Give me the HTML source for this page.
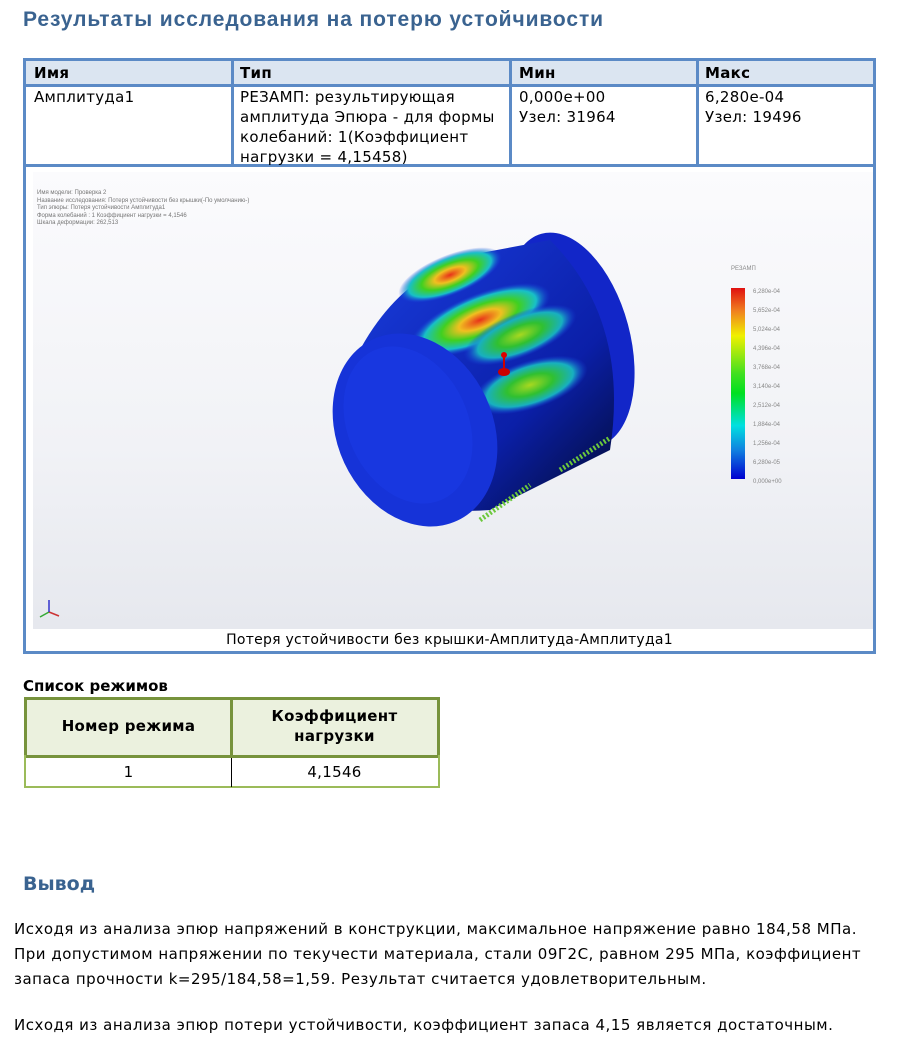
<!DOCTYPE html>
<html><head><meta charset="utf-8"><style>
body{margin:0;width:897px;height:1053px;background:#fff;font-family:"DejaVu Sans","Liberation Sans",sans-serif;color:#000;position:relative;overflow:hidden}
.a{position:absolute;white-space:nowrap}
h1{position:absolute;left:23px;top:8px;margin:0;font-family:"Liberation Sans",sans-serif;font-size:21px;font-weight:bold;color:#3a6390;letter-spacing:0.9px}
.t{font-size:15px;line-height:20px;letter-spacing:0.3px}
</style></head><body>
<h1>Результаты исследования на потерю устойчивости</h1>
<div class="a" style="left:23px;top:58px;width:847px;height:590px;border:3px solid #5b8ac6"></div>
<div class="a" style="left:26px;top:61px;width:847px;height:24px;background:#dbe5f1"></div>
<div class="a" style="left:26px;top:84px;width:847px;height:3px;background:#5b8ac6"></div>
<div class="a" style="left:26px;top:164px;width:847px;height:3px;background:#5b8ac6"></div>
<div class="a" style="left:231px;top:61px;width:3px;height:104px;background:#5b8ac6"></div>
<div class="a" style="left:509px;top:61px;width:3px;height:104px;background:#5b8ac6"></div>
<div class="a" style="left:696px;top:61px;width:3px;height:104px;background:#5b8ac6"></div>
<div class="a t" style="left:34px;top:63px;font-weight:bold">Имя</div>
<div class="a t" style="left:240px;top:63px;font-weight:bold">Тип</div>
<div class="a t" style="left:519px;top:63px;font-weight:bold">Мин</div>
<div class="a t" style="left:705px;top:63px;font-weight:bold">Макс</div>
<div class="a t" style="left:34px;top:87px">Амплитуда1</div>
<div class="a t" style="left:240px;top:87px">РЕЗАМП: результирующая<br>амплитуда Эпюра - для формы<br>колебаний: 1(Коэффициент<br>нагрузки = 4,15458)</div>
<div class="a t" style="left:519px;top:87px">0,000e+00<br>Узел: 31964</div>
<div class="a t" style="left:705px;top:87px">6,280e-04<br>Узел: 19496</div>
<div class="a" style="left:33px;top:172px;width:840px;height:457px;background:linear-gradient(180deg,#fbfbfd 0%,#f1f2f6 60%,#e6e8ee 100%)"></div>
<div class="a" style="left:37px;top:190px;font-family:'Liberation Sans',sans-serif;font-size:6px;line-height:7.6px;color:#777">Имя модели: Проверка 2<br>Название исследования: Потеря устойчивости без крышки(-По умолчанию-)<br>Тип эпюры: Потеря устойчивости Амплитуда1<br>Форма колебаний : 1 Коэффициент нагрузки = 4,1546<br>Шкала деформации: 262,513</div>
<svg class="a" style="left:330px;top:220px" width="320" height="320" viewBox="0 0 320 320">
<defs>
<radialGradient id="h1" cx="0.5" cy="0.5" r="0.5"><stop offset="0" stop-color="#e8301a"/><stop offset="0.3" stop-color="#f0c020"/><stop offset="0.55" stop-color="#40d020"/><stop offset="0.8" stop-color="#18c0c8"/><stop offset="1" stop-color="#1840e0" stop-opacity="0"/></radialGradient>
<radialGradient id="h2" cx="0.5" cy="0.5" r="0.5"><stop offset="0" stop-color="#a8d820"/><stop offset="0.4" stop-color="#30c030"/><stop offset="0.75" stop-color="#18b0c0"/><stop offset="1" stop-color="#1840e0" stop-opacity="0"/></radialGradient>
<linearGradient id="bd" x1="0" y1="0" x2="1" y2="1"><stop offset="0" stop-color="#1a3ee0"/><stop offset="0.65" stop-color="#0b1fa8"/><stop offset="1" stop-color="#020a30"/></linearGradient>
</defs>
<ellipse cx="240" cy="120" rx="60" ry="110" transform="rotate(-15 240 120)" fill="#1226c8"/>
<path d="M20 150 Q60 60 140 35 L220 20 Q300 100 280 230 L160 290 Q40 300 20 200 Z" fill="url(#bd)"/>
<ellipse cx="120" cy="55" rx="55" ry="20" transform="rotate(-22 120 55)" fill="url(#h1)"/>
<ellipse cx="150" cy="100" rx="75" ry="26" transform="rotate(-22 150 100)" fill="url(#h1)"/>
<ellipse cx="190" cy="115" rx="60" ry="22" transform="rotate(-22 190 115)" fill="url(#h2)"/>
<ellipse cx="200" cy="165" rx="60" ry="24" transform="rotate(-18 200 165)" fill="url(#h2)"/>
<ellipse cx="85" cy="210" rx="78" ry="100" transform="rotate(-25 85 210)" fill="#1633d8"/>
<ellipse cx="78" cy="205" rx="60" ry="82" transform="rotate(-25 78 205)" fill="#1a3ae6" opacity="0.6"/>
<line x1="174" y1="135" x2="174" y2="150" stroke="#c00" stroke-width="2"/>
<circle cx="174" cy="135" r="3" fill="#d00"/><ellipse cx="174" cy="152" rx="6" ry="4" fill="#c00"/>
<path d="M150 300 L200 265 M230 250 L280 218" stroke="#6cc83c" stroke-width="5" stroke-dasharray="2 2"/>
</svg>
<div class="a" style="left:731px;top:266px;font-family:'Liberation Sans',sans-serif;font-size:6px;color:#888">РЕЗАМП</div>
<div class="a" style="left:731px;top:288px;width:14px;height:191px;background:linear-gradient(180deg,#e01010,#f08020 12%,#f0f000 25%,#40e020 45%,#00e020 55%,#00e0e0 72%,#1080e0 85%,#0000d0)"></div>
<div class="a" style="left:753px;top:283px;font-family:'Liberation Sans',sans-serif;font-size:6px;line-height:19px;color:#888">6,280e-04<br>5,652e-04<br>5,024e-04<br>4,396e-04<br>3,768e-04<br>3,140e-04<br>2,512e-04<br>1,884e-04<br>1,256e-04<br>6,280e-05<br>0,000e+00</div>
<svg class="a" style="left:38px;top:598px" width="24" height="20"><path d="M11 14L2 19" stroke="#3a3" stroke-width="1.5"/><path d="M11 14L21 18" stroke="#c33" stroke-width="1.5"/><path d="M11 2V14" stroke="#33c" stroke-width="1.5"/></svg>
<div class="a" style="left:26px;top:630px;width:847px;text-align:center;font-size:14px;line-height:20px;letter-spacing:0.25px">Потеря устойчивости без крышки-Амплитуда-Амплитуда1</div>
<div class="a" style="left:23px;top:677px;font-size:15px;font-weight:bold">Список режимов</div>
<div class="a" style="left:24px;top:697px;width:410px;height:55px;background:#ebf1de;border:3px solid #77933c"></div>
<div class="a" style="left:230px;top:697px;width:3px;height:61px;background:#77933c"></div>
<div class="a" style="left:24px;top:755px;width:412px;height:31px;border:2px solid #9bbb59;border-top:none"></div>
<div class="a" style="left:231px;top:758px;width:1px;height:29px;background:#000"></div>
<div class="a t" style="left:26px;top:716px;width:205px;text-align:center;font-weight:bold">Номер режима</div>
<div class="a t" style="left:233px;top:706px;width:203px;text-align:center;font-weight:bold">Коэффициент<br>нагрузки</div>
<div class="a t" style="left:26px;top:762px;width:205px;text-align:center">1</div>
<div class="a t" style="left:233px;top:762px;width:203px;text-align:center">4,1546</div>
<div class="a" style="left:23px;top:873px;font-size:19px;font-weight:bold;color:#3a6390">Вывод</div>
<div class="a" style="left:14px;top:917px;font-size:15px;line-height:25px;letter-spacing:0.5px">Исходя из анализа эпюр напряжений в конструкции, максимальное напряжение равно 184,58 МПа.<br>При допустимом напряжении по текучести материала, стали 09Г2С, равном 295 МПа, коэффициент<br>запаса прочности k=295/184,58=1,59. Результат считается удовлетворительным.</div>
<div class="a" style="left:14px;top:1013px;font-size:15px;line-height:25px;letter-spacing:0.5px">Исходя из анализа эпюр потери устойчивости, коэффициент запаса 4,15 является достаточным.</div>
</body></html>
